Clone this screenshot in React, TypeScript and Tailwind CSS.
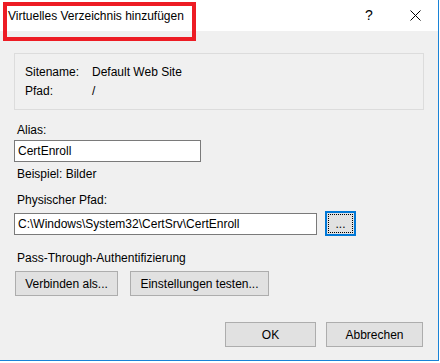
const font = { fontFamily: '"Liberation Sans", Arial, sans-serif' };

const Btn = ({ label, w }: { label: string; w: string }) => (
    <button
        className={`${w} flex h-[25px] items-center justify-center border border-[#adadad] bg-[#e1e1e1] text-[12px] text-black`}
    >
        {label}
    </button>
);

export default function App() {
    return (
        <div className="h-[363px] w-[440px] bg-white" style={font}>
            <div className="flex h-[361px] w-[439px] flex-col border-b border-r border-[#1883d7] bg-[#f0f0f0]">
                {/* title bar */}
                <div className="relative flex h-[31px] shrink-0 items-center bg-white">
                    <span className="pl-2 text-[12px] text-black">Virtuelles Verzeichnis hinzufügen</span>
                    <div className="ml-auto flex h-full">
                        <div className="flex w-[46px] items-center justify-center text-[14px] text-black">?</div>
                        <div className="flex w-[46px] items-center justify-center">
                            <svg width="11" height="11" viewBox="0 0 11 11" stroke="#000" strokeWidth="1">
                                <path d="M0.5 0.5 L10.5 10.5 M10.5 0.5 L0.5 10.5" />
                            </svg>
                        </div>
                    </div>
                    {/* annotation */}
                    <div className="absolute left-[3px] top-[2px] h-[39px] w-[193px] border-4 border-[#ed1c24]"></div>
                </div>

                <div className="flex flex-1 flex-col px-[14px] text-[12px] leading-[16px] text-black">
                    <div className="mt-[22px] h-[57px] w-[410px] border border-[#dcdcdc] pl-[10px] pt-[10px]">
                        <div className="flex h-[19px]">
                            <span className="w-[67px]">Sitename:</span>
                            <span>Default Web Site</span>
                        </div>
                        <div className="flex h-[19px]">
                            <span className="w-[67px]">Pfad:</span>
                            <span>/</span>
                        </div>
                    </div>

                    <div className="mt-[12px] pl-[3px]">Alias:</div>
                    <div className="mt-[2px] flex h-[22px] w-[187px] items-center border border-[#7a7a7a] bg-white pl-[3px]">
                        CertEnroll
                    </div>
                    <div className="mt-[4px] pl-[3px]">Beispiel: Bilder</div>

                    <div className="mt-[10px] pl-[3px]">Physischer Pfad:</div>
                    <div className="mt-[3px] flex items-center">
                        <div className="flex h-[22px] w-[303px] items-center border border-[#7a7a7a] bg-white pl-[3px]">
                            C:\Windows\System32\CertSrv\CertEnroll
                        </div>
                        <button className="ml-[8px] h-[25px] w-[31px] border-2 border-[#0078d7] bg-[#e1e1e1] p-[1px]">
                            <div className="flex h-full w-full items-center justify-center border border-dotted border-black leading-none">
                                ...
                            </div>
                        </button>
                    </div>

                    <div className="mt-[14px] pl-[3px]">Pass-Through-Authentifizierung</div>
                    <div className="ml-[1px] mt-[5px] flex gap-[12px]">
                        <Btn label="Verbinden als..." w="w-[103px]" />
                        <Btn label="Einstellungen testen..." w="w-[139px]" />
                    </div>

                    <div className="mt-[26px] flex justify-end gap-[10px] pr-px">
                        <Btn label="OK" w="w-[91px]" />
                        <Btn label="Abbrechen" w="w-[97px]" />
                    </div>
                </div>
            </div>
        </div>
    );
}
